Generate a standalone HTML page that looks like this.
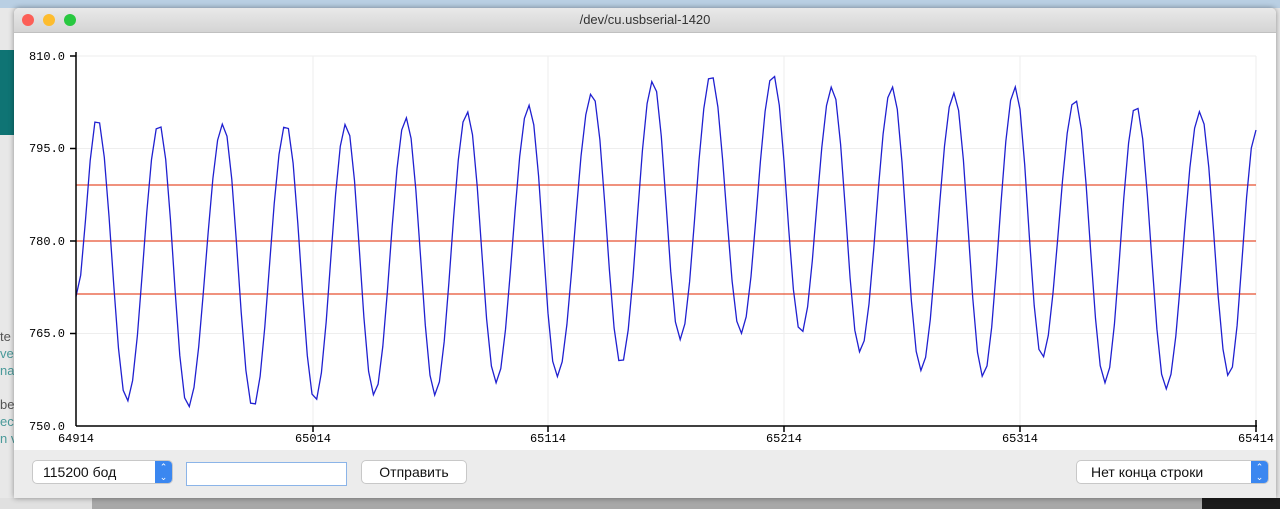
<!DOCTYPE html>
<html><head><meta charset="utf-8"><style>
body{margin:0;width:1280px;height:509px;overflow:hidden;background:#e8e8e8;font-family:"Liberation Sans",sans-serif;position:relative}
.menubar{position:absolute;left:0;top:0;width:1280px;height:8px;background:#b9cfe3}
.win{position:absolute;left:14px;top:8px;width:1262px;height:490px;background:#fff;box-shadow:0 0 6px rgba(0,0,0,.4);border-radius:5px 5px 0 0;overflow:hidden}
.title{height:24px;background:linear-gradient(#e9e9e9,#d4d4d4);border-bottom:1px solid #c0c0c0;text-align:center;font-size:13px;line-height:24px;color:#333}
.dot{position:absolute;top:6px;width:12px;height:12px;border-radius:50%}
.bottom{position:absolute;left:0;top:442px;width:1262px;height:48px;background:#ececec}
.sel{position:absolute;top:11px;height:22px;background:#fff;border-radius:4px;box-shadow:0 0 0 1px #c8c8c8;font-size:14px;line-height:22px;color:#111}
.arr{position:absolute;right:0;top:0;width:17px;height:22px;background:#3b87f0;border-radius:0 4px 4px 0;color:#fff;font-size:9px;text-align:center;line-height:10px;padding-top:1px;box-sizing:border-box}
</style></head><body>
<div class="menubar"></div>
<div style="position:absolute;left:0;top:50px;width:14px;height:85px;background:#0f7474"></div>
<div style="position:absolute;left:0;top:498px;width:92px;height:11px;background:#e0e0e0"></div>
<div style="position:absolute;left:92px;top:498px;width:1110px;height:11px;background:#a8a8a8"></div>
<div style="position:absolute;left:1202px;top:498px;width:78px;height:11px;background:#1c1c1c"></div>
<div style="position:absolute;left:0;top:328px;font-size:13px;line-height:17px;color:#4a9a9a">
<span style="color:#555">te</span><br>ve<br>na<br><br><span style="color:#555">be</span><br>ec<br>n v</div>
<div class="win">
<div class="title">/dev/cu.usbserial-1420</div>
<div class="dot" style="left:8px;background:#fc5f57"></div>
<div class="dot" style="left:29px;background:#fdbc2e"></div>
<div class="dot" style="left:50px;background:#28c840"></div>
<svg style="position:absolute;left:0;top:0" width="1262" height="442" font-family="Liberation Mono,monospace" font-size="12" fill="#000">
<g transform="translate(-14,-8)">
<g stroke="#eee" stroke-width="1">
<line x1="313" y1="56" x2="313" y2="426"/><line x1="548" y1="56" x2="548" y2="426"/><line x1="784" y1="56" x2="784" y2="426"/><line x1="1020" y1="56" x2="1020" y2="426"/><line x1="1256" y1="56" x2="1256" y2="426"/>
<line x1="76" y1="56" x2="1256" y2="56"/><line x1="76" y1="148.5" x2="1256" y2="148.5"/><line x1="76" y1="241" x2="1256" y2="241"/><line x1="76" y1="333.5" x2="1256" y2="333.5"/>
</g>
<g stroke="#e85030" stroke-width="1.3"><line x1="76" y1="185" x2="1256" y2="185"/><line x1="76" y1="241" x2="1256" y2="241"/><line x1="76" y1="294" x2="1256" y2="294"/></g>
<polyline id="w" fill="none" stroke="#2020d0" stroke-width="1.3"/>
<g stroke="#000" stroke-width="1.5"><line x1="76" y1="52" x2="76" y2="426"/><line x1="76" y1="426" x2="1257" y2="426"/>
<line x1="70" y1="56" x2="76" y2="56"/><line x1="70" y1="148.5" x2="76" y2="148.5"/><line x1="70" y1="241" x2="76" y2="241"/><line x1="70" y1="333.5" x2="76" y2="333.5"/>
<line x1="313" y1="426" x2="313" y2="432"/><line x1="548" y1="426" x2="548" y2="432"/><line x1="784" y1="426" x2="784" y2="432"/><line x1="1020" y1="426" x2="1020" y2="432"/><line x1="1256" y1="420" x2="1256" y2="432"/></g>
<g text-anchor="end"><text x="65" y="60">810.0</text><text x="65" y="152">795.0</text><text x="65" y="245">780.0</text><text x="65" y="337">765.0</text><text x="65" y="430">750.0</text></g>
<g text-anchor="middle"><text x="76" y="442">64914</text><text x="313" y="442">65014</text><text x="548" y="442">65114</text><text x="784" y="442">65214</text><text x="1020" y="442">65314</text><text x="1256" y="442">65414</text></g>
</g></svg>
<div class="bottom">
<div class="sel" style="left:19px;width:139px"><span style="padding-left:10px">115200 бод</span><div class="arr">⌃<br>⌄</div></div>
<div style="position:absolute;left:172px;top:12px;width:159px;height:22px;background:#fff;border:1px solid #8bb4e8"></div>
<div class="sel" style="left:348px;width:104px;text-align:center">Отправить</div>
<div class="sel" style="left:1063px;width:191px"><span style="padding-left:14px">Нет конца строки</span><div class="arr">⌃<br>⌄</div></div>
</div>
</div>
<script>
var ex=[[76,771],[97,800],[127,754],[159,799],[188,753],[223,799],[253,753],[286,799],[315,754],[346,799],[374,755],[406,800],[435,755],[467,801],[496,757],[529,802],[557,758],[592,804],[621,760],[653,806],[680,764],[711,807],[741,765],[773,807],[801,765],[832,805],[860,762],[892,805],[921,759],[954,804],[983,758],[1015,805],[1042,761],[1075,803],[1105,757],[1136,802],[1166,756],[1200,801],[1229,758],[1256,798]];
var pts=[];
for(var x=76;x<=1257;x+=4.72){
 for(var i=0;i<ex.length-1;i++){if(x>=ex[i][0]&&x<=ex[i+1][0])break;}
 if(i>=ex.length-1)i=ex.length-2;
 var a=ex[i],b=ex[i+1],t=(x-a[0])/(b[0]-a[0]);
 if(t>1)t=1;
 var v=a[1]+(b[1]-a[1])*(1-Math.cos(Math.PI*t))/2;
 pts.push(x.toFixed(1)+","+(56+(810-v)*370/60).toFixed(1));
}
document.getElementById("w").setAttribute("points",pts.join(" "));
</script>
</body></html>
